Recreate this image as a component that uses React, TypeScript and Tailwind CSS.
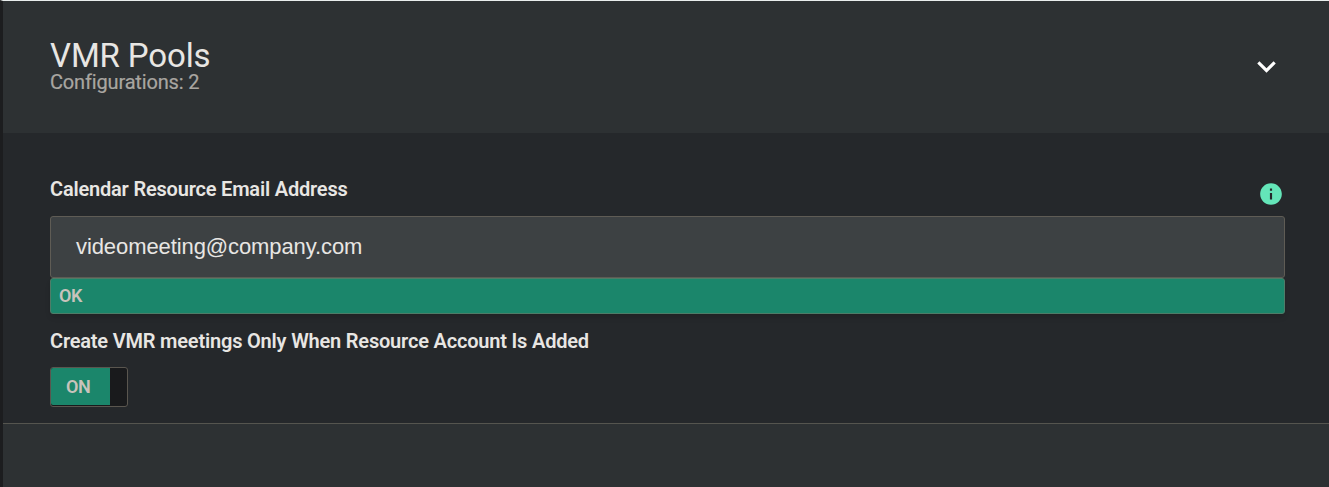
import type {ReactNode} from 'react';

type PanelHeaderProps = {
  title: string;
  subtitle: string;
};

function PanelHeader({title, subtitle}: PanelHeaderProps) {
  return (
    <header className="flex h-[132px] items-start justify-between bg-[#2d3133] pl-[47px] pr-11">
      <div className="pt-[36px]">
        <h2 className="text-[33px] leading-[38px] tracking-[-0.13px] text-[#e8e6e3]">{title}</h2>
        <p className="text-[20px] leading-[15px] tracking-[-0.16px] text-[#a9a6a1] [-webkit-text-stroke:0.2px_#a9a6a1]">
          {subtitle}
        </p>
      </div>
      <button type="button" className="mt-[47px] text-white" aria-label="Collapse">
        <svg className="h-[37px] w-[37px]" viewBox="0 0 24 24" fill="currentColor">
          <path d="M7.41 8.59 12 13.17l4.59-4.58L18 10l-6 6-6-6z" />
        </svg>
      </button>
    </header>
  );
}

function FieldLabel({children}: {children: ReactNode}) {
  return (
    <span className="text-[20px] font-semibold leading-6 tracking-[-0.19px] text-[#e8e6e3]">
      {children}
    </span>
  );
}

function InfoIcon() {
  return (
    <svg className="mt-1 h-[26px] w-[26px] text-[#64e6b9]" viewBox="0 0 24 24" fill="currentColor">
      <path d="M12 2C6.48 2 2 6.48 2 12s4.48 10 10 10 10-4.48 10-10S17.52 2 12 2zm1 15h-2v-6h2v6zm0-8h-2V7h2v2z" />
    </svg>
  );
}

function EmailField() {
  return (
    <div>
      <div className="flex h-[39px] items-start justify-between pr-px">
        <FieldLabel>Calendar Resource Email Address</FieldLabel>
        <InfoIcon />
      </div>
      <div className="flex h-[62px] items-center rounded-[3px] border border-[#5f5c55] bg-[#3d4143] px-[25px] pb-0.5 font-['Liberation_Sans',sans-serif] text-[22px] tracking-[-0.09px] text-[#e8e6e3]">
        videomeeting@company.com
      </div>
      <div className="flex h-9 items-center rounded-[3px] border border-[#4f7c68] bg-[#1b866b] px-[8px] pb-0.5 text-[18px] font-semibold tracking-[-0.3px] text-[#c8c3bc] shadow-md">
        OK
      </div>
    </div>
  );
}

function Toggle() {
  return (
    <div className="mt-[14px] flex h-10 w-[78px] rounded-[3px] border border-[#5a564f] bg-[#191a1c]">
      <span className="flex h-[37px] w-[59px] items-center rounded-l-[2px] bg-[#1b866b] pl-[15px] text-[18px] font-semibold tracking-[-0.3px] text-[#c8c3bc]">
        ON
      </span>
    </div>
  );
}

export default function App() {
  return (
    <main className="flex h-[487px] flex-col border-l-[3px] border-l-[#1c1d1f] border-t border-t-[#e9eeed] bg-[#2d3133] font-['Roboto',sans-serif]">
      <PanelHeader title="VMR Pools" subtitle="Configurations: 2" />
      <section className="h-[291px] border-b border-[#55554f] bg-[#25282b] pl-[47px] pr-11 pt-[44px]">
        <EmailField />
        <div className="mt-[15px] flex flex-col">
          <FieldLabel>Create VMR meetings Only When Resource Account Is Added</FieldLabel>
          <Toggle />
        </div>
      </section>
    </main>
  );
}
